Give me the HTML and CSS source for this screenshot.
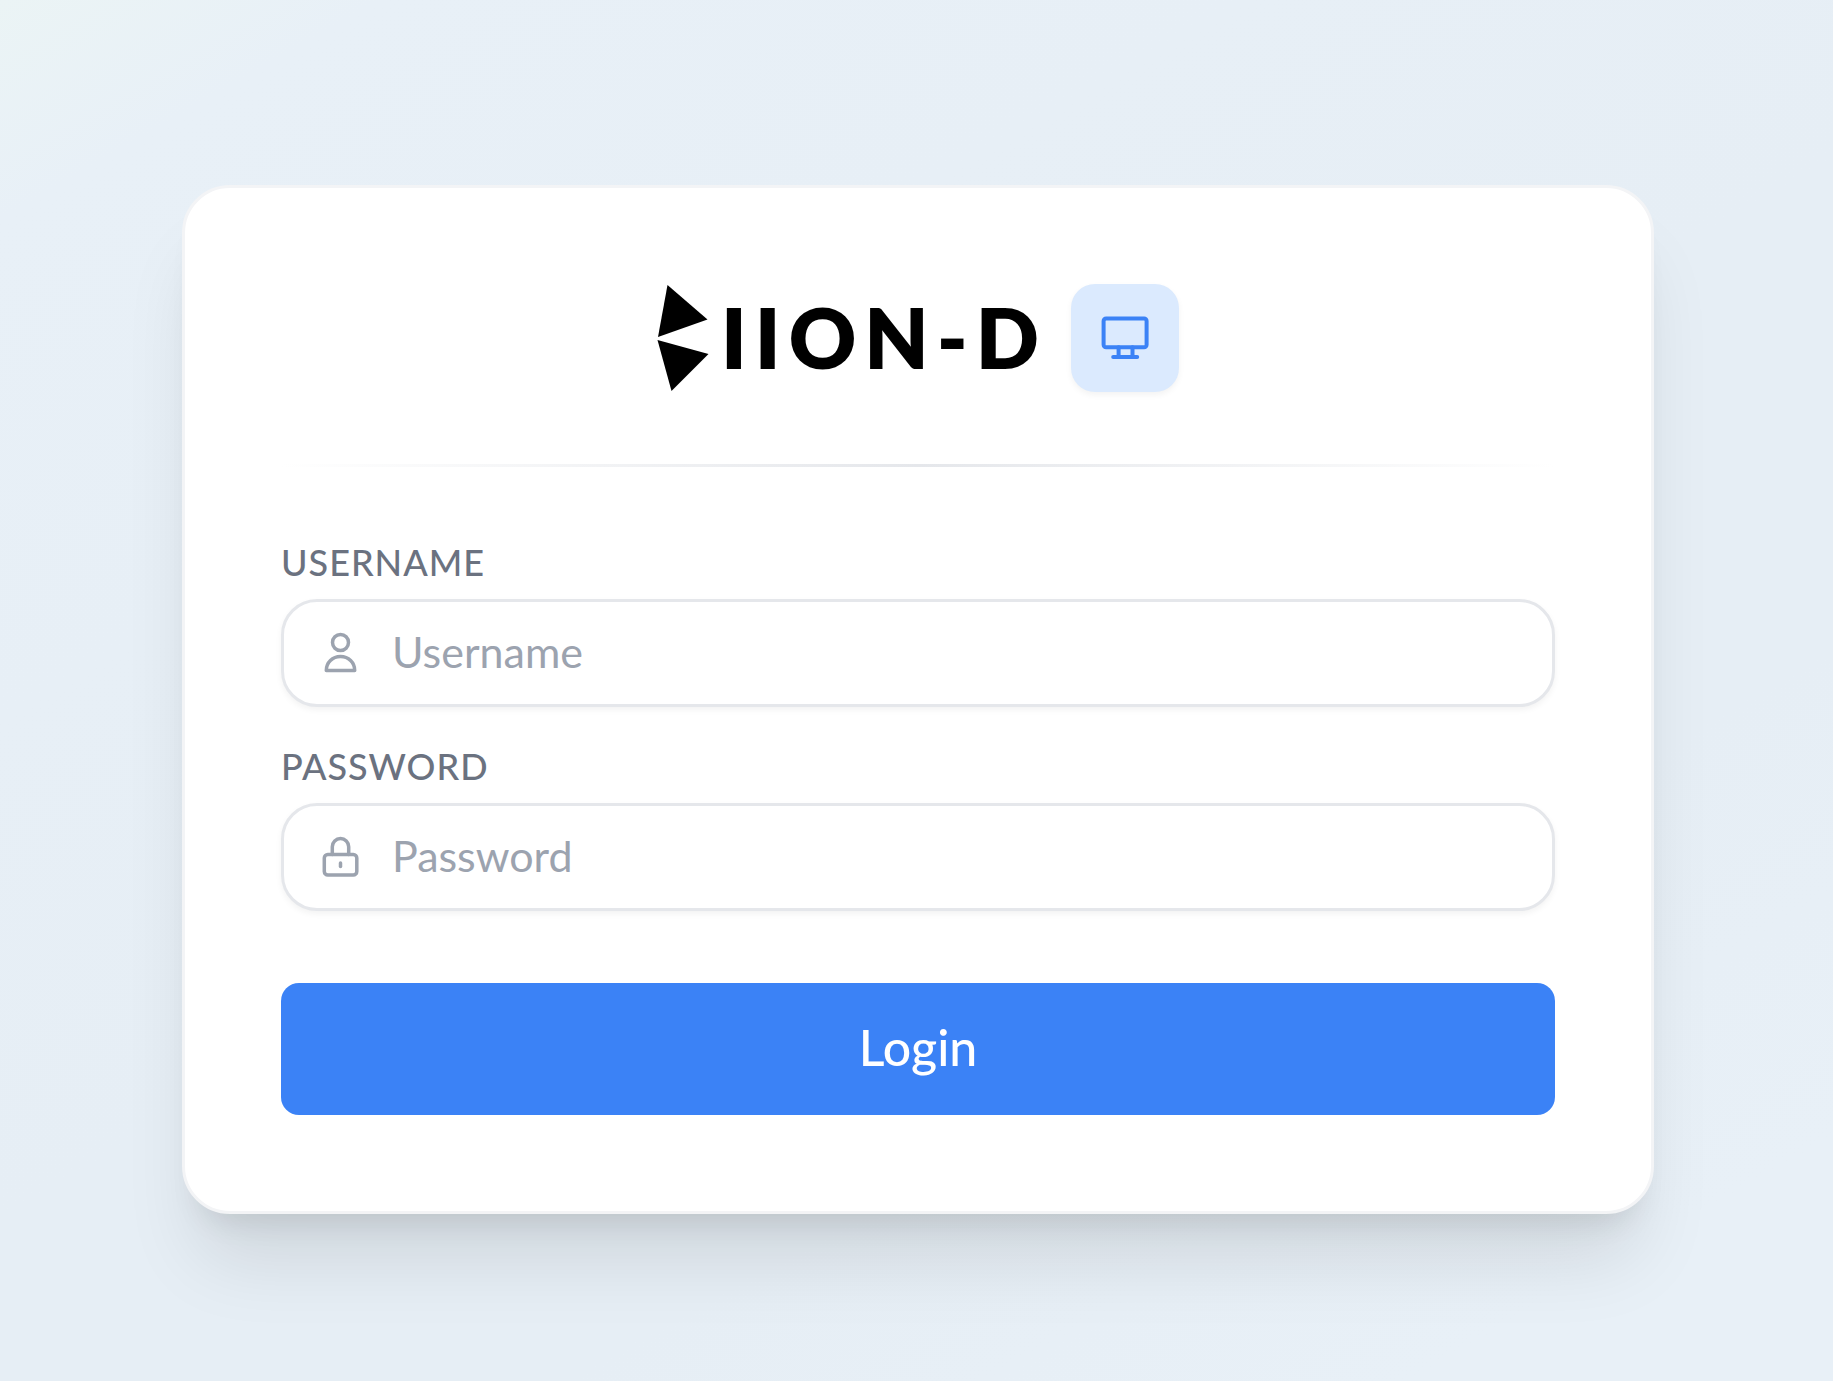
FILE: index.html
```html
<!DOCTYPE html>
<html lang="en">
<head>
	<meta charset="utf-8">
	<meta name="viewport" content="width=device-width, initial-scale=1">
	<title>IION-D Login</title>
	<link rel="stylesheet" href="styles.css">
</head>
<body>

	<main class="login-card">
		<header class="brand">
			<div class="logo">
				<svg class="logo-mark" viewBox="0 0 52 108" aria-hidden="true">
					<path d="M10.500 1L50.500 35.500L1 53z"/>
					<path d="M.5 56L51.500 70L14.500 107z"/>
				</svg>
				<span class="logo-text">IION-D</span>
			</div>
			<div class="brand-icon">
				<svg viewBox="0 0 54 54" aria-hidden="true">
					<rect x="5.600" y="7.500" width="43" height="28.700" rx="2.500"/>
					<path d="M20.600 36.200V46M34.500 36.200V46M15.200 46H39.200"/>
				</svg>
			</div>
		</header>

		<div class="divider"></div>

		<form class="login-form">
			<div class="field">
				<label for="username">USERNAME</label>
				<div class="input-wrap">
					<svg viewBox="0 0 48 48" stroke-width="3.500" aria-hidden="true">
						<circle cx="24.500" cy="13.500" r="8"/>
						<path d="M10.300 41.500C10.300 33.500 16.500 27.500 24.500 27.500S38.700 33.500 38.700 41.500z"/>
					</svg>
					<input id="username" type="text" placeholder="Username">
				</div>
			</div>
			<div class="field">
				<label for="password">PASSWORD</label>
				<div class="input-wrap">
					<svg viewBox="0 0 48 48" stroke-width="3.500" aria-hidden="true">
						<rect x="8.300" y="21.500" width="32.500" height="20.500" rx="3.500"/>
						<path d="M16.300 21.500V13.700a8.200 8.200 0 0 1 16.400 0V21.500"/>
						<path d="M24.500 30v3.500"/>
					</svg>
					<input id="password" type="password" placeholder="Password">
				</div>
			</div>
			<button class="login-button" type="submit">Login</button>
		</form>
	</main>

</body>
</html>
```
FILE: styles.css
```css
* {
	box-sizing: border-box;
}

body {
	margin: 0;
	min-height: 100vh;
	padding: 185px 179px 166px 182px;
	font-family: Lato, "Open Sans", sans-serif;
	background: linear-gradient(150deg, #ebf4f5 0%, #e8f0f7 9%, #e6eef5 50%, #e6eef5 70%, #e8f0f7 90%);
}

.login-card {
	padding: 96px;
	border: 3px solid #f3f4f6;
	border-radius: 48px;
	background: #fff;
	box-shadow: 0 60px 75px -15px rgba(0, 10, 0, .1), 0 24px 30px -18px rgba(0, 20, 0, .1);
}

/* Brand */
.brand {
	display: flex;
	align-items: center;
	justify-content: center;
	gap: 24px;
}
.logo {
	display: flex;
	align-items: center;
	gap: 12px;
}
.logo-mark {
	width: 52px;
	height: 108px;
}
.logo-text {
	padding-bottom: 2px;
	font-size: 83px;
	line-height: 106px;
	font-weight: 800;
	letter-spacing: 8px;
	color: #000;
}
.brand-icon {
	display: flex;
	align-items: center;
	justify-content: center;
	width: 108px;
	height: 108px;
	border-radius: 24px;
	background: #dbeafe;
	box-shadow: 0 3px 6px rgba(0, 0, 0, .05);
}
.brand-icon svg {
	width: 54px;
	height: 54px;
	fill: none;
	stroke: #3b82f6;
	stroke-width: 4;
	stroke-linecap: round;
	stroke-linejoin: round;
}

.divider {
	height: 3px;
	margin: 72px 0;
	background: linear-gradient(to right, transparent, #e5e7eb, transparent);
}

/* Form */
.login-form {
	display: flex;
	flex-direction: column;
	gap: 36px;
}
.field {
	display: flex;
	flex-direction: column;
	gap: 12px;
}
.field label {
	font-size: 36px;
	line-height: 46px;
	padding-bottom: 2px;
	font-weight: 500;
	letter-spacing: 1px;
	color: #6b7280;
}
.input-wrap {
	display: flex;
	align-items: center;
	gap: 28px;
	height: 108px;
	padding: 0 32px;
	border: 3px solid #e5e7eb;
	border-radius: 36px;
	background: #fff;
	box-shadow: 0 3px 6px rgba(0, 0, 0, .05);
}
.input-wrap svg {
	flex: none;
	width: 48px;
	height: 48px;
	fill: none;
	stroke: #9ca3af;
	stroke-linecap: round;
	stroke-linejoin: round;
}
.input-wrap input {
	flex: 1;
	min-width: 0;
	height: 60px;
	padding: 0 0 4px;
	border: 0;
	outline: 0;
	background: transparent;
	font: 43px Lato, "Open Sans", sans-serif;
	color: #374151;
}
.input-wrap input::placeholder {
	color: #9ca3af;
}
.login-button {
	height: 132px;
	margin-top: 36px;
	padding: 0 0 4px;
	border: 0;
	border-radius: 18px;
	background: #3b82f6;
	font: 500 50px Lato, "Open Sans", sans-serif;
	color: #fff;
	cursor: pointer;
}
```
